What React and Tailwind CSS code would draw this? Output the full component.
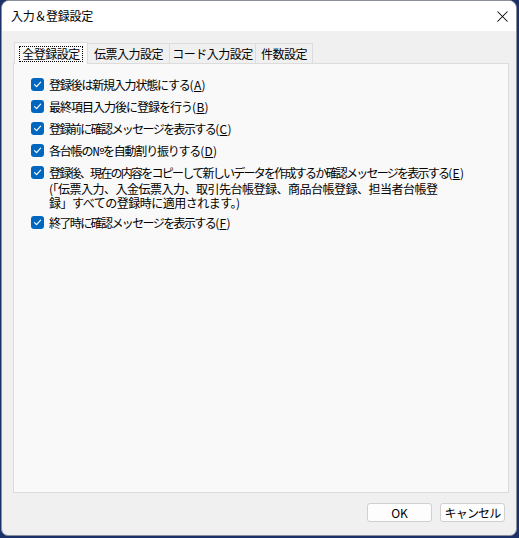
import { X } from "lucide-react";

const options = [
  { label: "登録後は新規入力状態にする", key: "A", track: "tracking-[-1.2px]" },
  { label: "最終項目入力後に登録を行う", key: "B", track: "tracking-[-1px]" },
  { label: "登録前に確認メッセージを表示する", key: "C", track: "tracking-[-1.6px]" },
  { label: "各台帳の№を自動割り振りする", key: "D", track: "tracking-[-1.2px]" },
  {
    label: "登録後、現在の内容をコピーして新しいデータを作成するか確認メッセージを表示する",
    key: "E",
    track: "tracking-[-1.75px]",
    note: ["(「伝票入力、入金伝票入力、取引先台帳登録、商品台帳登録、担当者台帳登", "録」すべての登録時に適用されます。)"],
  },
  { label: "終了時に確認メッセージを表示する", key: "F", track: "tracking-[-1.6px]" },
];

const tabs = [
  { label: "伝票入力設定", w: "w-[83px]" },
  { label: "コード入力設定", w: "w-[87px]" },
  { label: "件数設定", w: "w-[58px]" },
];

function CheckBox() {
  return (
    <span className="flex h-[13px] w-[13px] shrink-0 items-center justify-center rounded-[3px] bg-[#0067c0]">
      <svg width="9" height="9" viewBox="0 0 9 9" fill="none">
        <path d="M1.5 4.6 L3.6 6.6 L7.6 2.2" stroke="white" strokeWidth="1.2" strokeLinecap="round" strokeLinejoin="round" />
      </svg>
    </span>
  );
}

export default function App() {
  return (
    <div
      className="h-[538px] w-[519px] bg-[#1c3168] pl-[1px] text-[12px] leading-none text-black"
      style={{ fontFamily: '"Noto Sans CJK JP", "Noto Sans", sans-serif' }}
    >
      <div className="flex h-[536px] w-[516px] flex-col overflow-hidden rounded-t-[8px] rounded-b-[7px] border border-[#8a8f99] bg-[#f0f0f0]">
        {/* title bar */}
        <div className="flex h-[30px] items-center justify-between bg-white pl-[9px] pr-[4px]">
          <span className="tracking-[-0.3px]">入力＆登録設定</span>
          <X size={19} strokeWidth={1.3} />
        </div>

        <div className="flex flex-1 flex-col pl-[11px] pr-[7px] pt-[11px]">
          {/* tabs */}
          <div className="relative z-10 flex items-end pl-[1px]">
            <div className="-mb-[1px] flex h-[22px] w-[74px] items-center justify-center border border-b-0 border-[#dcdcdc] bg-[#f9f9f9]">
              <span className="border border-dotted border-black px-[2px] py-[1px] tracking-[-0.5px]">全登録設定</span>
            </div>
            {tabs.map((t) => (
              <div
                key={t.label}
                className={`-ml-[1px] flex h-[20px] items-center justify-center border border-b-0 border-[#dcdcdc] bg-[#f0f0f0] tracking-[-0.5px] first:ml-0 ${t.w}`}
              >
                {t.label}
              </div>
            ))}
          </div>

          {/* panel */}
          <div className="flex h-[430px] flex-col gap-[9px] border border-[#dcdcdc] bg-[#f9f9f9] pl-[17px] pt-[14px]">
            {options.map((o) => (
              <div key={o.key} className={`flex flex-col ${o.note ? "-mb-[3px]" : ""}`}>
                <div className="flex items-center gap-[5px] whitespace-nowrap">
                  <CheckBox />
                  <span>
                    <span className={o.track}>{o.label}</span>
                    <span className="tracking-[0.3px]">
                      (<span className="underline">{o.key}</span>)
                    </span>
                  </span>
                </div>
                {o.note && (
                  <p className="mt-[3px] whitespace-nowrap pl-[18px] leading-[14px] tracking-[-0.5px]">
                    {o.note[0]}
                    <br />
                    {o.note[1]}
                  </p>
                )}
              </div>
            ))}
          </div>

          {/* buttons */}
          <div className="mt-[10px] flex justify-end gap-[8px] pr-[4px]">
            <button className="h-[19px] w-[65px] rounded-[3px] border border-[#d0d0d0] bg-[#fdfdfd] text-[12px]">OK</button>
            <button className="h-[19px] w-[65px] rounded-[3px] border border-[#d0d0d0] bg-[#fdfdfd] text-[12px] tracking-[-0.8px]">
              キャンセル
            </button>
          </div>
        </div>
      </div>
    </div>
  );
}
